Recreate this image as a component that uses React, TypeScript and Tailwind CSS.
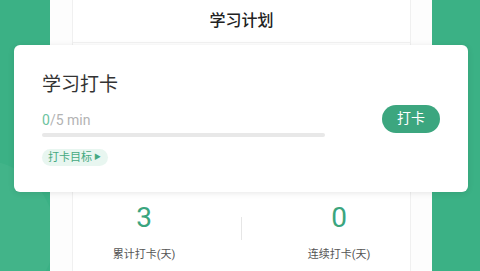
import React from "react";

const font = { fontFamily: "Roboto, 'Noto Sans CJK SC', sans-serif" };

function CheckInCard() {
  return (
    <div className="absolute left-[14px] top-[45px] flex h-[147px] w-[454px] items-center justify-between rounded-[6px] bg-white pl-[28px] pr-[28px] shadow-[0_1px_6px_rgba(0,0,0,0.10)]">
      <div className="flex w-[283px] flex-col">
        <div className="text-[19px] leading-[26px] text-[#333]">学习打卡</div>
        <div className="mt-[12px] text-[14px] leading-[20px] text-[#b3b3b3]">
          <span className="text-[#6cc3a0]">0</span>/5 min
        </div>
        <div className="mt-[3px] h-[4px] w-full rounded-full bg-[#e8e8e8]" />
        <div className="mt-[12px] flex">
          <span className="flex h-[17px] items-center gap-[2px] rounded-full bg-[#e8f6f0] pl-[6px] pr-[7px] text-[11px] leading-none text-[#45a981]">
            打卡目标
            <span className="text-[7px]">▶</span>
          </span>
        </div>
      </div>
      <button className="h-[28px] w-[58px] rounded-full bg-[#3ca67f] text-[14px] text-white">
        打卡
      </button>
    </div>
  );
}

function Stat({ value, label }: { value: string; label: string }) {
  return (
    <div className="flex w-[150px] shrink-0 flex-col items-center">
      <div className="text-[28px] leading-[30px] text-[#3aa57e]">{value}</div>
      <div className="mt-[15px] text-[11px] leading-[14px] text-[#555]">{label}</div>
    </div>
  );
}

export default function App() {
  return (
    <div
      className="relative flex h-[271px] w-[480px] overflow-hidden bg-[#3bb185]"
      style={font}
    >
      <div className="absolute left-[-95px] top-[160px] h-[150px] w-[150px] rounded-full bg-white/[0.04]" />
      <div className="w-[50px] shrink-0" />
      <div className="flex w-[382px] shrink-0 bg-[#fdfdfd] pl-[22px] pr-[21px]">
        <div className="flex w-full flex-col border-x border-[#f0f0f0] bg-white">
          <div className="flex h-[43px] items-center justify-center border-b border-[#f2f2f2] text-[16px] font-medium text-[#222]">
            学习计划
          </div>
          <div className="h-[160px]" />
          <div className="flex items-start justify-center">
            <Stat value="3" label="累计打卡(天)" />
            <div className="mx-[22px] mt-[14px] h-[23px] w-px shrink-0 bg-[#e6e6e6]" />
            <Stat value="0" label="连续打卡(天)" />
          </div>
        </div>
      </div>
      <CheckInCard />
    </div>
  );
}
